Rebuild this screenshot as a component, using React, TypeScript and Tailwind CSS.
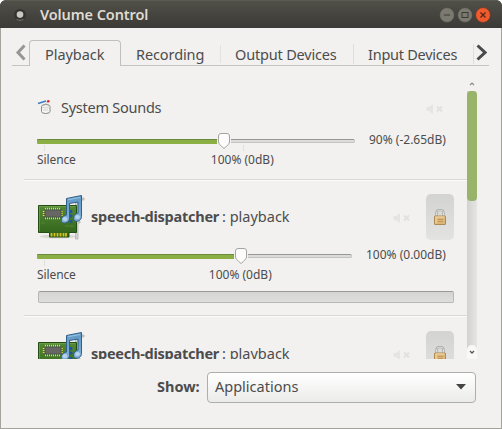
import type { ReactNode } from "react";

function TitleBar() {
  return (
    <header className="flex h-7 shrink-0 items-center rounded-t-[6px] border-t border-[#5b5a53] bg-linear-to-b from-[#504f48] to-[#3b3a36] pr-[11px] pl-[13px]">
      <svg width="14" height="16" viewBox="0 0 14 16">
        <circle cx="7" cy="8" r="6" fill="#35342f" />
        <path d="M3.5 12.4Q7 14.6 10.500 12.400" fill="none" stroke="#77766e" strokeWidth="1" />
        <circle cx="7" cy="7.600" r="3.300" fill="#cbc9c1" />
      </svg>
      <h1 className="ml-[13px] flex-1 text-[14.500px] leading-[25px] font-semibold tracking-[-0.100px] text-[#dfdbd2]">Volume Control</h1>
      <svg className="shrink-0" width="52" height="16" viewBox="0 0 52 16" fill="none">
        <circle cx="8" cy="8" r="7.400" fill="#7b7970" stroke="#45443e" strokeWidth=".7" />
        <path d="M4.800 8H11" stroke="#3b3a35" strokeWidth="1.200" />
        <circle cx="26" cy="8" r="7.400" fill="#7b7970" stroke="#45443e" strokeWidth=".7" />
        <rect x="23" y="5.500" width="6" height="5" stroke="#3b3a35" />
        <circle cx="44" cy="8" r="7.400" fill="#f05a2c" stroke="#64382a" strokeWidth=".7" />
        <path d="M41.500 5.500L46.500 10.500M46.500 5.500L41.500 10.500" stroke="#4b2a1b" strokeWidth="1.200" />
      </svg>
    </header>
  );
}

function TabBar() {
  return (
    <nav className="mt-3 ml-[11px] flex h-[26px] w-[477px] shrink-0 text-[14.500px] text-[#4c4c4c]">
      <div className="w-[17px] border-b border-[#c5c4c1] pt-[4px] pl-[3px]">
        <svg width="11" height="18" viewBox="0 0 11 18" fill="none">
          <path d="M9.500 1.500L3 8.500L9.500 15.500" stroke="#969696" strokeWidth="3" />
        </svg>
      </div>
      <div className="w-[92px] rounded-t-[4px] border border-b-0 border-[#c0bfbc] pl-[15px] leading-[26px]">
        <span className="tracking-[-0.050px]">Playback</span>
      </div>
      <div className="w-[99px] border-b border-[#c5c4c1] pl-[15px] leading-[28px] tracking-[-0.100px]">Recording</div>
      <div className="w-[133px] border-b border-[#c5c4c1] bg-linear-to-b from-[#e3e2df] to-[#e3e2df] bg-[length:1px_18px] bg-[position:0px_5px] bg-no-repeat pl-[15px] leading-[28px] tracking-[-0.180px]">Output Devices</div>
      <div className="w-[120px] border-b border-[#c5c4c1] bg-linear-to-b from-[#dfdedb] to-[#dfdedb] bg-[length:1px_20px] bg-[position:0px_4px] bg-no-repeat pl-[15px] leading-[28px] tracking-[-0.250px]">Input Devices</div>
      <div className="w-4 border-b border-[#c5c4c1] bg-linear-to-b from-[#dfdedb] to-[#dfdedb] bg-[length:1px_20px] bg-[position:0px_4px] bg-no-repeat pt-1 pl-[2px]">
        <svg width="12" height="18" viewBox="0 0 12 18" fill="none">
          <path d="M2.500 1.500L10 8.500L2.500 15.500" stroke="#4a4a4a" strokeWidth="3" />
        </svg>
      </div>
    </nav>
  );
}

function MutedIcon() {
  return (
    <svg width="20" height="14" viewBox="0 0 20 14">
      <path d="M1.500 5H4L8 2V12L4 9H1.500Z" fill="#e5e4e0" />
      <path d="M12 4.500L17 9.500M17 4.500L12 9.500" stroke="#e2e1dd" strokeWidth="2" />
    </svg>
  );
}

function DrumIcon() {
  return (
    <svg width="16" height="16" viewBox="0 0 16 16">
      <path d="M4.500 7.500Q4.500 5.500 8.700 5.500Q13 5.500 13 7.500V12.500Q13 14.500 8.700 14.500Q4.500 14.500 4.500 12.500Z" fill="#f4f4f3" stroke="#8a8a87" />
      <path d="M5 8Q9 10 12.500 8M6 11H11" fill="none" stroke="#d4d3cf" />
      <path d="M1 4.500L9 2" stroke="#3f7ec5" strokeWidth="1.600" />
      <path d="M6.500 7L10.500 3" stroke="#aaa9a6" strokeWidth=".8" />
      <circle cx="11.300" cy="2.200" r="1.300" fill="#d9252c" />
    </svg>
  );
}

function SoundCardIcon() {
  return (
    <svg className="shrink-0" width="48" height="48" viewBox="0 0 48 48">
      <defs>
        <linearGradient id="board" x1="0" y1="0" x2="0" y2="1">
          <stop stopColor="#568935" />
          <stop offset="1" stopColor="#2e6118" />
        </linearGradient>
        <linearGradient id="note" x1="0" y1="0" x2="0" y2="1">
          <stop stopColor="#5f97c4" />
          <stop offset="1" stopColor="#85b2d8" />
        </linearGradient>
      </defs>
      <ellipse cx="21" cy="42.500" rx="18" ry="2" fill="#d9d9d4" />
      <path d="M38.500 6.500V45H41V29H43V27H41V6H47V4H44" fill="#d4d4d4" stroke="#aaa" strokeWidth=".7" />
      <path d="M1.500 11.500H39.500V38.500H32V43H12.500V38.500H1.500Z" fill="url(#board)" stroke="#254e14" />
      <path d="M2.500 37.500V12.500H38" fill="none" stroke="#72a54c" strokeOpacity=".7" />
      <path d="M8 15H24M8 24H24" stroke="#e0df35" strokeWidth="2.500" strokeDasharray="1 1" />
      <path d="M7 17V23M24.500 17V23" stroke="#e0df35" strokeWidth="2.500" strokeDasharray="1 1" />
      <rect x="8" y="16" width="16" height="7" fill="#666765" stroke="#50514b" />
      <path d="M14.500 39V42.500M17.500 39V42.500M20.500 39V42.500M23.500 39V42.500M26.500 39V42.500M29 39V42.500" stroke="#d9c21c" strokeWidth="1.800" />
      <path d="M4 29H8M28 32H37" stroke="#52852f" />
      <path d="M34 16V19M33 21L35 23M34 26V29" stroke="#1d559c" strokeWidth="2.500" />
      <path d="M29.500 4.500L44.500 1.500V22.500C44.500 26 41 28 38 27C35.500 25.500 36 20.500 41 19V8L32.500 9.500V25C32 28 28 30 25.500 28.500C23 26.500 24.500 22 29.500 21Z" fill="url(#note)" stroke="#315f87" />
      <path d="M31 5.700L43.300 3.300" stroke="#91bfdf" strokeWidth="1.200" />
      <ellipse cx="28" cy="25" rx="2.500" ry="2" fill="#b6d4ec" />
      <ellipse cx="40.500" cy="23" rx="2.500" ry="2" fill="#b6d4ec" />
    </svg>
  );
}

function LockButton() {
  return (
    <button className="flex h-[46px] w-7 shrink-0 items-center justify-center rounded-[5px] bg-linear-to-b from-[#d3d3d2] to-[#e3e3e2]">
      <svg width="14" height="18" viewBox="0 0 14 18">
        <path d="M3.500 9V5Q3.500 2 7 2Q10.500 2 10.500 5V9" fill="none" stroke="#a0a29d" strokeWidth="2.200" />
        <path d="M3.500 8V5Q3.500 2 7 2Q10.500 2 10.500 5V8" fill="none" stroke="#dddfdb" strokeWidth="1" />
        <rect x="1.500" y="8" width="11" height="8.500" rx=".5" fill="#dcb578" stroke="#ad8a56" />
        <path d="M2.500 9H11.500" stroke="#f3deb4" />
        <path d="M5 11.500H10M5 13.500H10" stroke="#bd9052" strokeWidth=".8" />
        <path d="M3 9V15.500" stroke="#f3dca8" />
      </svg>
    </button>
  );
}

interface VolumeProps {
  trough: string;
  fill: string;
  readout: string;
  baseLabelClass: string;
  ticksClass: string;
}

function VolumeSlider({ trough, fill, readout, baseLabelClass, ticksClass }: VolumeProps) {
  return (
    <div className="pl-[13px] text-[12px] text-[#4c4c4c]">
      <div className="flex h-5 items-center">
        <div className={`${trough} flex h-5 shrink-0 items-center`}>
          <div className={`${fill} h-[5px] rounded-l-[1px] border-t border-[#698b3b] bg-[#8caf45]`} />
          <svg className="shrink-0" width="14" height="18" viewBox="0 0 14 18">
            <path d="M4 1.500H10Q12.500 1.500 12.500 4V10Q12.500 12 7 16.500Q1.500 12 1.500 10V4Q1.500 1.500 4 1.500Z" fill="#fcfcfc" stroke="#a3a3a0" />
          </svg>
          <div className="h-[4px] flex-1 rounded-r-[2px] border border-l-0 border-[#c2c2bf] border-t-[#979795] bg-[#dcdcda]" />
        </div>
        <span className="-mt-[2px] ml-[14px] whitespace-nowrap">{readout}</span>
      </div>
      <div className={`${ticksClass} ml-[7px] -mt-[6px] h-[6px] border-l border-[#e1e0dd]`} />
      <div className="flex h-[18px] leading-[18px]">
        <span className="tracking-[-0.100px]">Silence</span>
        <span className={`${baseLabelClass} whitespace-nowrap`}>100% (0dB)</span>
      </div>
    </div>
  );
}

function Divider() {
  return <div className="h-[2px] border-t border-[#d9d8d5] bg-[#fafaf9]" />;
}

function Row({ children }: { children: ReactNode }) {
  return <section className="h-[137px] shrink-0">{children}</section>;
}

function SpeechStream() {
  return (
    <Row>
      <div className="flex h-[61px] items-start pt-[15px] pl-[13px]">
        <SoundCardIcon />
        <p className="ml-[6px] h-[46px] w-[301px] text-[14.500px] leading-[45px] whitespace-nowrap text-[#4c4c4c]">
          <b className="inline-block w-[131px] tracking-[-0.250px]">speech-dispatcher</b>
          <span>: playback</span>
        </p>
        <div className="mt-[17px] mr-[14px] w-5"><MutedIcon /></div>
        <LockButton />
      </div>
      <div className="mt-[6px]">
        <VolumeSlider trough="w-[315px]" fill="w-[197px]" readout="100% (0.00dB)" baseLabelClass="ml-[133px]" ticksClass="w-0" />
      </div>
      <div className="mt-[7px] mb-3 ml-[14px] h-3 w-[416px] rounded-[2px] border border-[#b8b8b5] border-t-[#999996] bg-linear-to-b from-[#d4d4d2] to-[#dededc]" />
      <Divider />
    </Row>
  );
}

function StreamList() {
  return (
    <main className="mt-3 ml-[23px] flex h-[281px] w-[454px] shrink-0">
      <div className="flex w-[443px] flex-col overflow-hidden">
        <section className="h-[101px] shrink-0">
          <div className="flex h-[53px] items-start pt-[21px] pl-[13px]">
            <DrumIcon />
            <span className="ml-[8px] w-[364px] text-[14.500px] leading-4 tracking-[-0.250px] text-[#4c4c4c]">System Sounds</span>
            <div className="mt-[3px]"><MutedIcon /></div>
          </div>
          <VolumeSlider trough="w-[318px]" fill="w-[180px]" readout="90% (-2.65dB)" baseLabelClass="ml-[135px]" ticksClass="w-[200px] border-r" />
          <div className="mt-[10px]"><Divider /></div>
        </section>
        <SpeechStream />
        <SpeechStream />
      </div>
      <div className="flex w-[10px] flex-col items-center bg-linear-to-r from-[#d2d2d1] to-[#e5e5e3]">
        <div className="flex h-[13px] w-full justify-center bg-[#f2f1f0] pt-1">
          <svg width="6" height="4" viewBox="0 0 6 4"><path d="M1 3L3 1L5 3" fill="none" stroke="#8b8b89" strokeWidth="1.200" /></svg>
        </div>
        <div className="h-[110px] w-full rounded-[4px] bg-[#98b36a]" />
        <div className="flex-1" />
        <div className="flex h-[14px] w-full justify-center rounded-t-[5px] bg-[#f8f8f7] pt-[5px]">
          <svg width="6" height="4" viewBox="0 0 6 4"><path d="M1 1L3 3L5 1" fill="none" stroke="#555" strokeWidth="1.300" /></svg>
        </div>
      </div>
    </main>
  );
}

export default function App() {
  return (
    <div className="h-[429px] w-[502px] overflow-hidden bg-white font-['Noto_Sans','Open_Sans',sans-serif]">
      <div className="flex h-[429px] w-[502px] flex-col overflow-hidden rounded-t-[6px] bg-[#3b3a36]">
        <TitleBar />
        <div className="flex flex-1 flex-col border border-t-0 border-[#a4a49c] bg-[#f2f1f0]">
          <TabBar />
          <StreamList />
          <footer className="mt-3 flex h-8 items-center">
            <label className="w-[206px] pl-[156px] text-[14.500px] font-bold text-[#4c4c4c]">Show:</label>
            <div className="flex h-[31px] w-[269px] items-center rounded-[4px] border border-[#aeaeab] bg-linear-to-b from-white to-[#ebebea] pr-[9px] pl-[7px] text-[14.500px] text-[#4c4c4c]">
              <span className="flex-1">Applications</span>
              <svg width="10" height="6" viewBox="0 0 10 6"><path d="M0 0H10L5 5.500Z" fill="#444" /></svg>
            </div>
          </footer>
        </div>
      </div>
    </div>
  );
}
